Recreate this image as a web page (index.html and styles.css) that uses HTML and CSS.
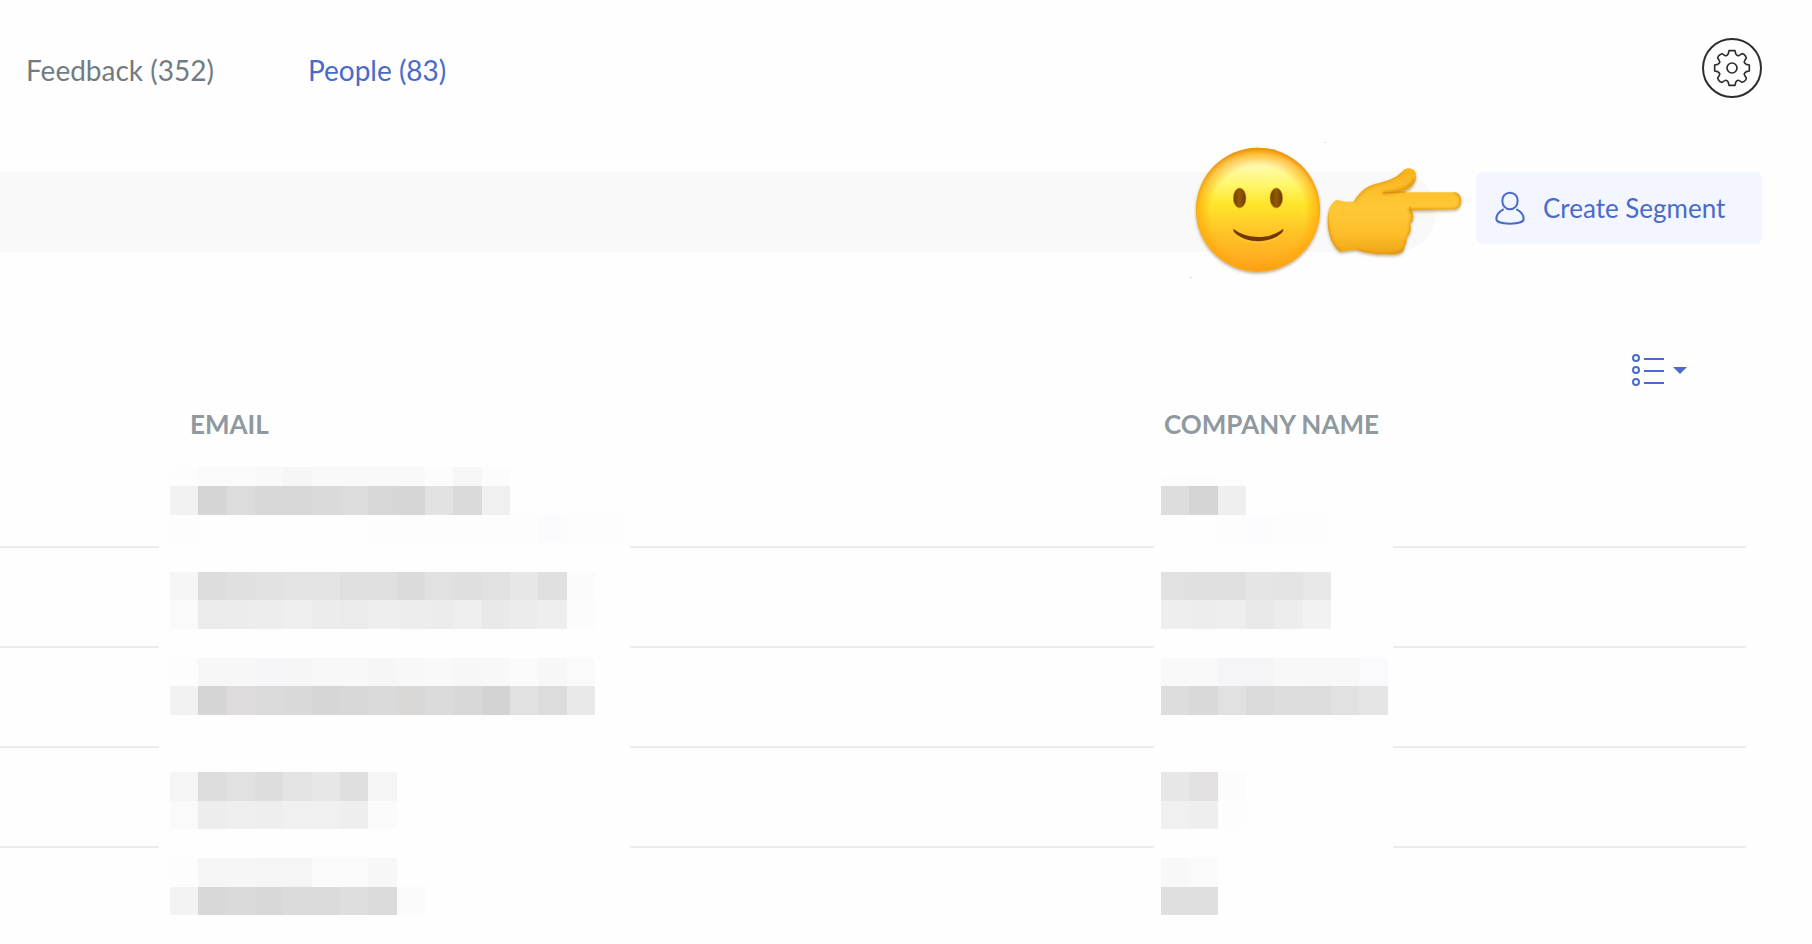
FILE: index.html
```html
<!DOCTYPE html>
<html lang="en">
<head>
<meta charset="utf-8">
<title>People</title>
<link rel="stylesheet" href="styles.css">
</head>
<body>
<header class="topbar">
  <nav class="tabs">
    <a class="tab" href="#feedback">Feedback (352)</a>
    <a class="tab tab-active" href="#people" aria-current="page">People (83)</a>
  </nav>
  <button class="settings" type="button" aria-label="Settings">
    <svg width="60" height="60" viewBox="-90 -90 180 180" fill="none" stroke="#2e2e30" stroke-width="6" stroke-linejoin="round">
      <circle r="87"/>
      <circle r="15" stroke-width="5"/>
      <path stroke-width="5" d="M-9-52H9L11-43Q16-34 22-38L30-43Q39-42 43-30L38-22Q34-16 43-11L52-9V9L43 11Q34 16 38 22L43 30Q42 39 30 43L22 38Q16 34 11 43L9 52H-9L-11 43Q-16 34-22 38L-30 43Q-39 42-43 30L-38 22Q-34 16-43 11L-52 9V-9L-43-11Q-34-16-38-22L-43-30Q-42-39-30-43L-22-38Q-16-34-11-43Z"/>
    </svg>
  </button>
</header>

<section class="filters">
  <div class="filter-bar">
    <svg class="callout" width="300" height="150" viewBox="0 0 900 450" aria-hidden="true">
      <defs>
        <linearGradient id="face" x1="0" y1="0" x2="0" y2="1">
          <stop offset="0" stop-color="#ffe45c"/>
          <stop offset=".12" stop-color="#fffbb8"/>
          <stop offset=".3" stop-color="#fff76a"/>
          <stop offset=".45" stop-color="#ffe62c"/>
          <stop offset=".68" stop-color="#ffc428"/>
          <stop offset="1" stop-color="#ffa21c"/>
        </linearGradient>
        <radialGradient id="rim" cx=".5" cy=".53" r=".53">
          <stop offset=".72" stop-color="#ffa000" stop-opacity="0"/>
          <stop offset=".9" stop-color="#ffa30a" stop-opacity=".6"/>
          <stop offset="1" stop-color="#e88905"/>
        </radialGradient>
        <linearGradient id="eye" x1="0" x2="1">
          <stop offset="0" stop-color="#703d00"/>
          <stop offset=".5" stop-color="#945b05"/>
          <stop offset="1" stop-color="#6b3900"/>
        </linearGradient>
        <linearGradient id="skin" x1="0" y1="0" x2="0" y2="1">
          <stop offset="0" stop-color="#f8b31c"/>
          <stop offset=".45" stop-color="#ffc836"/>
          <stop offset=".75" stop-color="#fdbf2b"/>
          <stop offset="1" stop-color="#efa519"/>
        </linearGradient>
        <filter id="drop" x="-10%" y="-10%" width="120%" height="125%">
          <feDropShadow dx="0" dy="5" stdDeviation="4" flood-color="#6b4a10" flood-opacity=".45"/>
        </filter>
        <filter id="soft" x="-20%" y="-40%" width="140%" height="180%">
          <feGaussianBlur stdDeviation="5"/>
        </filter>
        <clipPath id="hand-shape">
          <path d="M470 194C488 200 506 201 521 200C542 164 566 149 600 143C635 134 650 125 666 110C678 95 698 98 706 110C713 127 703 150 687 161C677 167 671 170 665 172H824C850 174 851 220 824 223L695 226C703 240 701 258 690 266C697 282 688 300 680 308C681 325 673 332 672 343C667 358 648 359 621 358C585 358 560 354 531 344C514 344 496 348 480 350C455 332 441 290 443 250C445 218 454 203 470 194Z"/>
        </clipPath>
      </defs>
      <g filter="url(#drop)">
        <circle cx="234" cy="224" r="186" fill="url(#face)"/>
        <circle cx="234" cy="224" r="186" fill="url(#rim)"/>
      </g>
      <g fill="url(#eye)" stroke="#ca9013" stroke-width="2">
        <ellipse cx="179" cy="189" rx="19" ry="30"/>
        <ellipse cx="289" cy="189" rx="19" ry="30"/>
      </g>
      <path d="M161 282C200 314 270 314 309 282C312 284 309 290 305 294C270 327 200 327 165 294C160 289 159 284 161 282Z" fill="#713900"/>
      <path d="M172 305C210 329 261 329 298 305" fill="none" stroke="#ffe16a" stroke-width="2" opacity=".5"/>
      <g filter="url(#drop)">
        <path fill="url(#skin)" d="M470 194C488 200 506 201 521 200C542 164 566 149 600 143C635 134 650 125 666 110C678 95 698 98 706 110C713 127 703 150 687 161C677 167 671 170 665 172H824C850 174 851 220 824 223L695 226C703 240 701 258 690 266C697 282 688 300 680 308C681 325 673 332 672 343C667 358 648 359 621 358C585 358 560 354 531 344C514 344 496 348 480 350C455 332 441 290 443 250C445 218 454 203 470 194Z"/>
      </g>
      <g clip-path="url(#hand-shape)" fill="none" stroke="#dc920f" stroke-width="9">
        <path d="M443 194C430 240 445 330 480 352" filter="url(#soft)"/>
        <path d="M530 346C570 362 650 365 674 345C680 310 700 290 692 266C706 252 700 234 692 226H824C853 220 851 174 824 170" filter="url(#soft)"/>
        <path d="M521 200C542 164 566 149 600 143C635 134 650 125 666 110" filter="url(#soft)" opacity=".7"/>
        <path d="M610 173C650 172 690 165 708 130" filter="url(#soft)"/>
      </g>
      <path d="M610 174C635 172 655 171 675 171M690 216Q687 222 695 227" fill="none" stroke="#d58b10" stroke-width="3" stroke-linecap="round"/>
      <circle cx="436" cy="22" r="2" fill="#bbb"/>
      <circle cx="32" cy="427" r="2" fill="#bbb"/>
    </svg>
  </div>
  <button class="create" type="button">
    <svg width="30" height="34" viewBox="0 0 90 102" fill="none" stroke="#4a6bc9" stroke-width="6" stroke-linecap="round" stroke-linejoin="round">
      <path d="M45 5C31 5 22 16 22 29C22 44 32 55 45 55C58 55 68 44 68 29C68 16 59 5 45 5Z"/>
      <path d="M24 56C12 62 4 73 4 84C4 93 22 98 45 98C68 98 86 93 86 84C86 73 78 62 66 56"/>
    </svg>
    <span>Create Segment</span>
  </button>
</section>

<div class="view-tools">
  <button class="columns" type="button" aria-label="Choose columns">
    <svg width="58" height="34" viewBox="0 0 58 34" fill="none" stroke="#4a6bc9" stroke-width="2">
      <circle cx="5" cy="5" r="3"/><circle cx="5" cy="17" r="3"/><circle cx="5" cy="29" r="3"/>
      <path d="M13 6H33M13 18H33M13 30H33"/>
      <path d="M42 14H56L49 21Z" fill="#4a6bc9" stroke="none"/>
    </svg>
  </button>
</div>

<table class="people">
  <colgroup><col class="c-lead"><col class="c-email"><col><col class="c-company"><col class="c-tail"></colgroup>
  <thead>
    <tr><td></td><th scope="col" class="h-email">Email</th><td></td><th scope="col" class="h-company">Company name</th><td></td></tr>
  </thead>
  <tbody id="rows"></tbody>
</table>
<script src="people.js"></script>
</body>
</html>
```

FILE: styles.css
```css
* { box-sizing: border-box; }
body {
  margin: 0;
  background: #fefefe;
  font-family: Lato, "Open Sans", sans-serif;
  font-size: 28px;
  line-height: 36px;
  overflow-x: hidden;
}
button { margin: 0; padding: 0; border: 0; background: none; font: inherit; cursor: pointer; }
svg { display: block; }
.topbar {
  display: flex;
  align-items: center;
  justify-content: space-between;
  padding: 38px 50px 0 26px;
}
.tabs { display: flex; gap: 94px; padding-top: 4px; }
.tab { color: #727b82; text-decoration: none; }
.tab-active { color: #4a6bc9; }
.filters {
  display: flex;
  align-items: flex-start;
  gap: 40px;
  padding: 74px 50px 0 0;
}
.filter-bar {
  position: relative;
  flex: 1;
  height: 80px;
  border-radius: 0 40px 40px 0;
  background: #f9f9f9;
}
.callout {
  position: absolute;
  top: -37px;
  right: -44px;
  pointer-events: none;
}
.create {
  display: flex;
  align-items: center;
  gap: 18px;
  width: 286px;
  height: 72px;
  padding: 0 0 0 19px;
  border-radius: 6px;
  background: #f3f6fe;
  color: #4a6bc9;
  font-size: 26px;
}
.view-tools {
  display: flex;
  justify-content: flex-end;
  padding: 101px 123px 0 0;
}
.people {
  width: calc(100% - 66px);
  margin-top: 19px;
  border-collapse: separate;
  border-spacing: 0;
  table-layout: fixed;
}
.people th, .people td { padding: 0; }
.people th {
  height: 42px;
  color: #8f999f;
  font-size: 26px;
  font-weight: 700;
  text-align: left;
  text-transform: uppercase;
  vertical-align: top;
  white-space: nowrap;
}
.people .h-email { padding-left: 31px; }
.people .h-company { padding-left: 10px; }
.c-lead { width: 159px; }
.c-email { width: 471px; }
.c-company { width: 239px; }
.c-tail { width: 353px; }
.people tbody tr { height: 100px; }
.rule { border-bottom: 2px solid #eaecf0; }
.people tbody tr:last-child .rule { border-bottom: 0; }
```

FILE: people.js
```js
// Redacted values: each band is [top, bottom, shades of consecutive cells].
const people = [
  {
    email: [[19, 38, "fd fa fa f9 f6 f9 f9 f9 f9 fc f7 fc"], [38, 67, "f2 d5 dc d8 d7 da dc d7 d6 e2 da f0"], [67, 95, "fd fe fe fe fe fe fe fd fd fd fd fd fd fbfbfe fd fd"]],
    company: [[30, 38, "fc fc fd"], [38, 67, "dd d5 ef"], [67, 95, "fe fe fd fcfcff fd fd"]]
  },
  {
    email: [[24, 52, "f6 dd e0 e2 e4 e4 e0 e0 db e1 df e1 e7 e0 fb"], [52, 81, "fa eb ec ed ef ec eb ee ed ec ef e9 ec ee fc"]],
    company: [[24, 52, "e1 e0 e0 e5 e4 e8"], [52, 81, "ee ed ee e9 ed f2"]]
  },
  {
    email: [[10, 38, "fd f7 f7 f6f6f8 f6 f8 f8 f6 f8 f9 f7 f8 fb f7 fa"], [38, 67, "f2 d5 dddbdb db d9 d6 d8 da dad7d7 db d8 d3 e1 dc e9"]],
    company: [[10, 38, "f9 f9 f5f5f8 f5f5f8 f8 f8 f8 fafafd"], [38, 67, "dd d9 e1 db dd dc e1 e5"]]
  },
  {
    email: [[24, 53, "f5 dc e1 dd e4 e7 df f5"], [53, 81, "fa ed ef ee f0 f0 ee fb"]],
    company: [[24, 53, "e7 e2e0e0 fc"], [53, 81, "f0 ee fd"]]
  },
  {
    email: [[10, 39, "fd f6 f6 f5 f5 fa fa f7"], [39, 67, "f3 d8 da d8 db db de db fb"]],
    company: [[10, 39, "f8 fa"], [39, 67, "df df"]]
  }
];

const CELL = 85 / 3;

function mosaic(bands, left, width) {
  const rects = bands.flatMap(([top, bottom, shades]) =>
    shades.split(" ").map((s, i) => {
      const x1 = Math.round(left + i * CELL);
      const x2 = Math.round(left + (i + 1) * CELL);
      const fill = s.length === 2 ? s + s + s : s;
      return `<rect x="${x1}" y="${top}" width="${x2 - x1}" height="${bottom - top}" fill="#${fill}"/>`;
    }));
  return `<svg width="${width}" height="100" viewBox="0 0 ${width} 100" role="img" aria-label="Hidden">${rects.join("")}</svg>`;
}

document.getElementById("rows").innerHTML = people.map(p => `<tr>
  <td class="rule"></td>
  <td>${mosaic(p.email, 11, 471)}</td>
  <td class="rule"></td>
  <td>${mosaic(p.company, 7, 239)}</td>
  <td class="rule"></td>
</tr>`).join("");
```
